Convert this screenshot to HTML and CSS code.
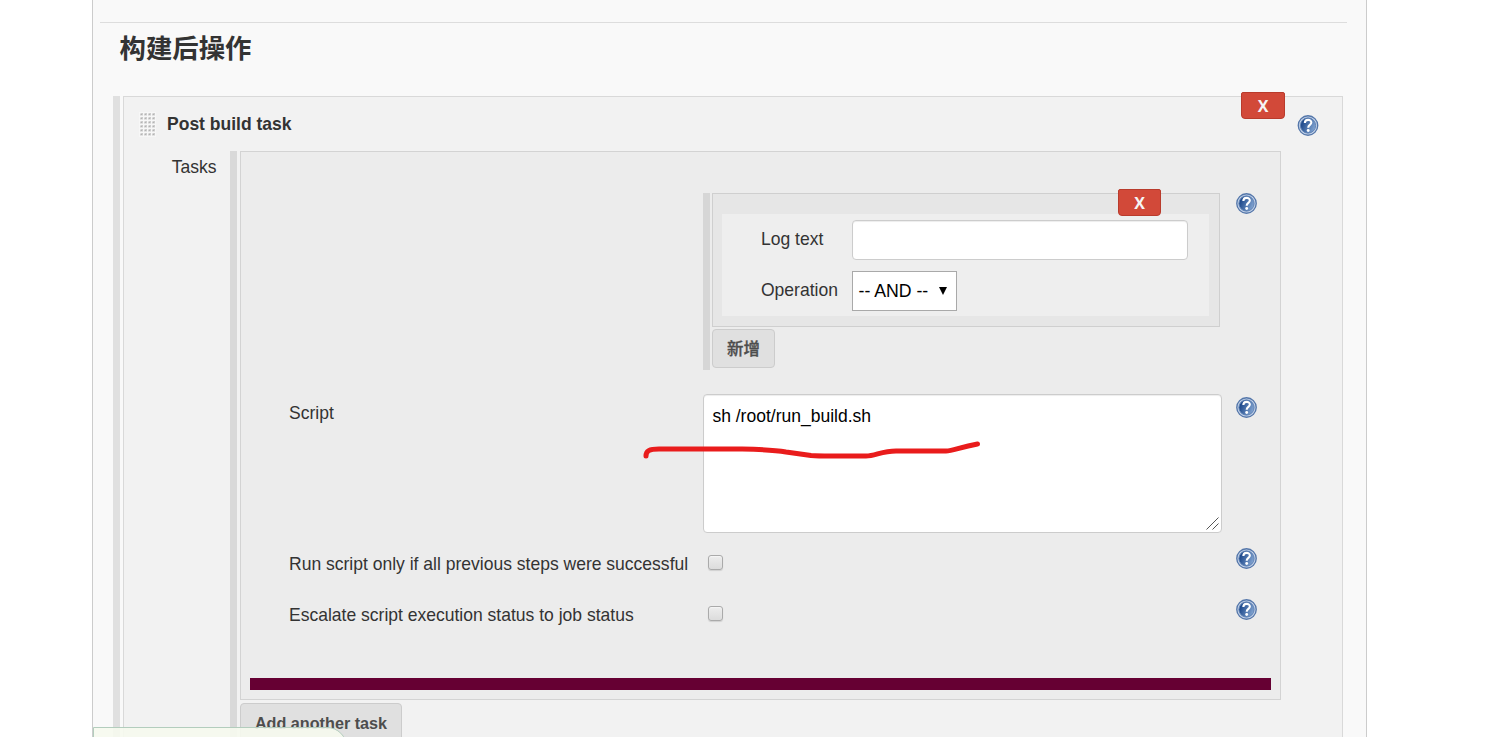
FILE: index.html
```html
<!DOCTYPE html>
<html lang="zh-CN">
<head>
<meta charset="utf-8">
<title>构建后操作</title>
<link rel="stylesheet" href="styles.css">
</head>
<body>
<svg class="defs" width="0" height="0">
  <defs>
    <linearGradient id="blue" x1="0" y1="0.3" x2="1" y2="0.7">
      <stop offset="0.1" stop-color="#1f4a8c"/>
      <stop offset="1" stop-color="#86a8d4"/>
    </linearGradient>
    <symbol id="help" viewBox="0 0 22 22">
      <circle cx="11" cy="11" r="10.2" fill="#c3d2e8" stroke="#5577aa" stroke-width="1.4"/>
      <circle cx="11" cy="11" r="8" fill="url(#blue)" stroke="#5f82b5" stroke-width="1"/>
      <path d="M7.700 8.300C7.700 4.200 14.500 4 14.500 7.900C14.500 10.400 11.200 10.400 11.200 13.300" fill="none" stroke="#fff" stroke-width="2.200"/>
      <circle cx="11.200" cy="16.200" r="1.500" fill="#fff"/>
    </symbol>
    <pattern id="dots" width="4" height="4" patternUnits="userSpaceOnUse">
      <rect width="4" height="4" fill="#f7f7f7"/>
      <rect x="1" y="1" width="3" height="3" fill="#e2e2e2"/>
      <rect x="2" y="1" width="2" height="2" fill="#cdcdcd"/>
      <rect x="1" y="2" width="2" height="1" fill="#d0d0d0"/>
      <rect x="2" y="2" width="1" height="1" fill="#b4b4b4"/>
    </pattern>
  </defs>
</svg>
<main class="page">
  <h2 class="section-title">构建后操作</h2>
  <div class="steps">
    <section class="step">
      <button class="delete delete-step">X</button>
      <header class="step-head">
        <svg class="grip" width="17" height="25"><rect width="17" height="25" fill="url(#dots)"/></svg>
        <b class="step-name">Post build task</b>
        <svg class="help"><use href="#help"/></svg>
      </header>
      <div class="tasks-row">
        <div class="tasks-label">Tasks</div>
        <div class="tasks">
          <div class="task">
            <div class="row row-logs">
              <div class="logs">
                <div class="log">
                  <button class="delete delete-log">X</button>
                  <div class="log-body">
                    <label class="log-label">Log text</label>
                    <div class="text-input"></div>
                    <label class="log-label">Operation</label>
                    <div class="select"><span>-- AND --</span><svg class="arrow" width="8" height="8"><path d="M0 0H8L4 8Z"/></svg></div>
                  </div>
                </div>
                <button class="button add-log">新增</button>
              </div>
              <svg class="help"><use href="#help"/></svg>
            </div>
            <div class="row row-script">
              <label class="label">Script</label>
              <div class="textarea">sh /root/run_build.sh
                <svg class="resizer" width="13" height="13"><path d="M.5 12.5L12.5 .5M6.5 12.5L12.5 6.5" fill="none" stroke="#555" stroke-width="1"/></svg>
              </div>
              <svg class="help"><use href="#help"/></svg>
            </div>
            <div class="row row-check">
              <label class="label">Run script only if all previous steps were successful</label>
              <span class="checkbox"></span>
              <svg class="help"><use href="#help"/></svg>
            </div>
            <div class="row row-check">
              <label class="label">Escalate script execution status to job status</label>
              <span class="checkbox"></span>
              <svg class="help"><use href="#help"/></svg>
            </div>
            <div class="divider"></div>
          </div>
          <button class="button add-task">Add another task</button>
        </div>
      </div>
    </section>
  </div>
</main>
<svg class="mark" width="345" height="24" viewBox="0 0 345 24">
  <path d="M6 16C6 11 9 9 19 9H102C125 9.500 134 10 146 12L171 15.500Q178 16 190 16H226C235 16 242 11 256 11H306C313 11 320 7 337.500 4" fill="none" stroke="#e91c1c" stroke-width="5" stroke-linecap="round" stroke-linejoin="round"/>
</svg>
<div class="status"></div>
</body>
</html>
```
FILE: styles.css
```css
* { box-sizing: border-box; }
body {
  margin: 0;
  position: relative;
  height: 737px;
  overflow: hidden;
  background: #fff;
  color: #333;
  font: 17.52px/24px "Liberation Sans", "Noto Sans CJK SC", sans-serif;
}
.defs { position: absolute; }
.page {
  width: 1275px;
  height: 760px;
  margin-left: 92px;
  padding: 22px 19px 0 7px;
  border: solid #ccc;
  border-width: 0 1px;
  background: #f9f9f9;
}
.section-title {
  margin: 0;
  height: 74px;
  padding: 4px 0 0 19.5px;
  border-top: 1px solid #ddd;
  font: bold 26.4px/40px "Noto Sans CJK SC", sans-serif;
}
.steps {
  margin: 0 -4px 0 13px;
  width: 1230px;
  height: 660px;
  padding-left: 3px;
  border-left: 7px solid #e0e0e0;
}
.step {
  position: relative;
  width: 1220px;
  height: 660px;
  border: 1px solid #d9d9d9;
  background: #f2f2f2;
}
.step-head { display: flex; height: 54px; padding: 15px 23px 0 15px; }
.step-name { flex: 1; margin-left: 11px; }
.help { flex: none; width: 21px; height: 21px; }
.step-head .help { width: 22px; margin-top: 3px; }
.tasks-row { display: flex; }
.tasks-label { width: 106px; padding: 4px 13.5px 0 0; text-align: right; }
.tasks { width: 1051px; height: 600px; padding-left: 3px; border-left: 7px solid #d9d9d9; }
.task {
  width: 1041px;
  height: 549px;
  padding: 41px 9px 0;
  border: 1px solid #d3d3d3;
  background: #ececec;
}
.row { display: flex; padding: 0 14px 0 39px; }
.row .help { margin-left: auto; }
.row-logs { height: 201px; padding-left: 453px; }
.logs { width: 517px; height: 177px; padding-left: 2px; border-left: 7px solid #d6d6d6; }
.log {
  position: relative;
  width: 508px;
  height: 134px;
  padding: 20px 9px 0;
  border: 1px solid #cfcfcf;
  background: #e6e6e6;
}
.log-body {
  display: grid;
  grid-template-columns: 91px 336px;
  grid-template-rows: 40px 40px;
  row-gap: 11px;
  width: 487px;
  height: 102px;
  padding: 6px 0 0 39px;
  background: #eee;
}
.log-label { padding-top: 7px; }
.text-input, .textarea {
  border: 1px solid #ccc;
  border-radius: 4px;
  background: #fff;
  box-shadow: inset 0 1px 1px rgba(0, 0, 0, .075);
}
.select {
  display: flex;
  align-items: center;
  width: 105px;
  padding: 0 9px 0 5.5px;
  justify-content: space-between;
  border: 1px solid #a9a9a9;
  background: #fff;
  color: #000;
}
.select span { font-size: 17.7px; }
.delete {
  position: absolute;
  height: 27px;
  padding: 1px 0 1px;
  border: 1px solid #b93b2c;
  border-radius: 2px 2px 4px 4px;
  background: #d24939;
  color: #f5f5f5;
  font: bold 16px/22px "Open Sans", sans-serif;
}
.delete-step { top: -5px; right: 57px; width: 44px; }
.delete-log { top: -5px; right: 58px; width: 43px; }
.button {
  display: block;
  border: 1px solid #ccc;
  border-radius: 4px;
  background: #e0e0e0;
  color: #4d4d4d;
  font: bold 16.2px/24px "Liberation Sans", "Noto Sans CJK SC", sans-serif;
}
.add-log { width: 63px; height: 39px; margin-top: 2px; padding: 0; font-size: 16.5px; font-weight: 500; -webkit-text-stroke: .3px #4d4d4d; }
.add-task { width: 162px; height: 40px; margin-top: 3px; padding: 0; }
.row-script { height: 152px; }
.label { width: 414px; padding-top: 7px; white-space: nowrap; }
.textarea { position: relative; width: 519px; height: 139px; padding: 9px 8.4px; color: #000; }
.resizer { position: absolute; right: 2px; bottom: 2px; }
.row-script .help { margin-top: 3px; }
.row-check { height: 51px; }
.row-check .label { padding-top: 6px; }
.row-check .help { margin-top: 2px; }
.checkbox {
  width: 15px;
  height: 15px;
  margin: 9px 0 0 5px;
  border: 1px solid #aaa;
  border-radius: 3px;
  background: linear-gradient(#ededed, #dcdcdc);
  box-shadow: 0 1px 1px rgba(0, 0, 0, .12), inset 0 1px 1px #f5f5f5;
}
.divider { height: 12px; margin-top: 30px; background: #660033; }
.mark { position: absolute; left: 640px; top: 440px; }
.status {
  position: absolute;
  left: 93px;
  top: 727px;
  width: 254px;
  height: 30px;
  border: 1px solid #b3cdbd;
  border-radius: 0 20px 0 0;
  background: rgba(246, 249, 238, .9);
}
```
